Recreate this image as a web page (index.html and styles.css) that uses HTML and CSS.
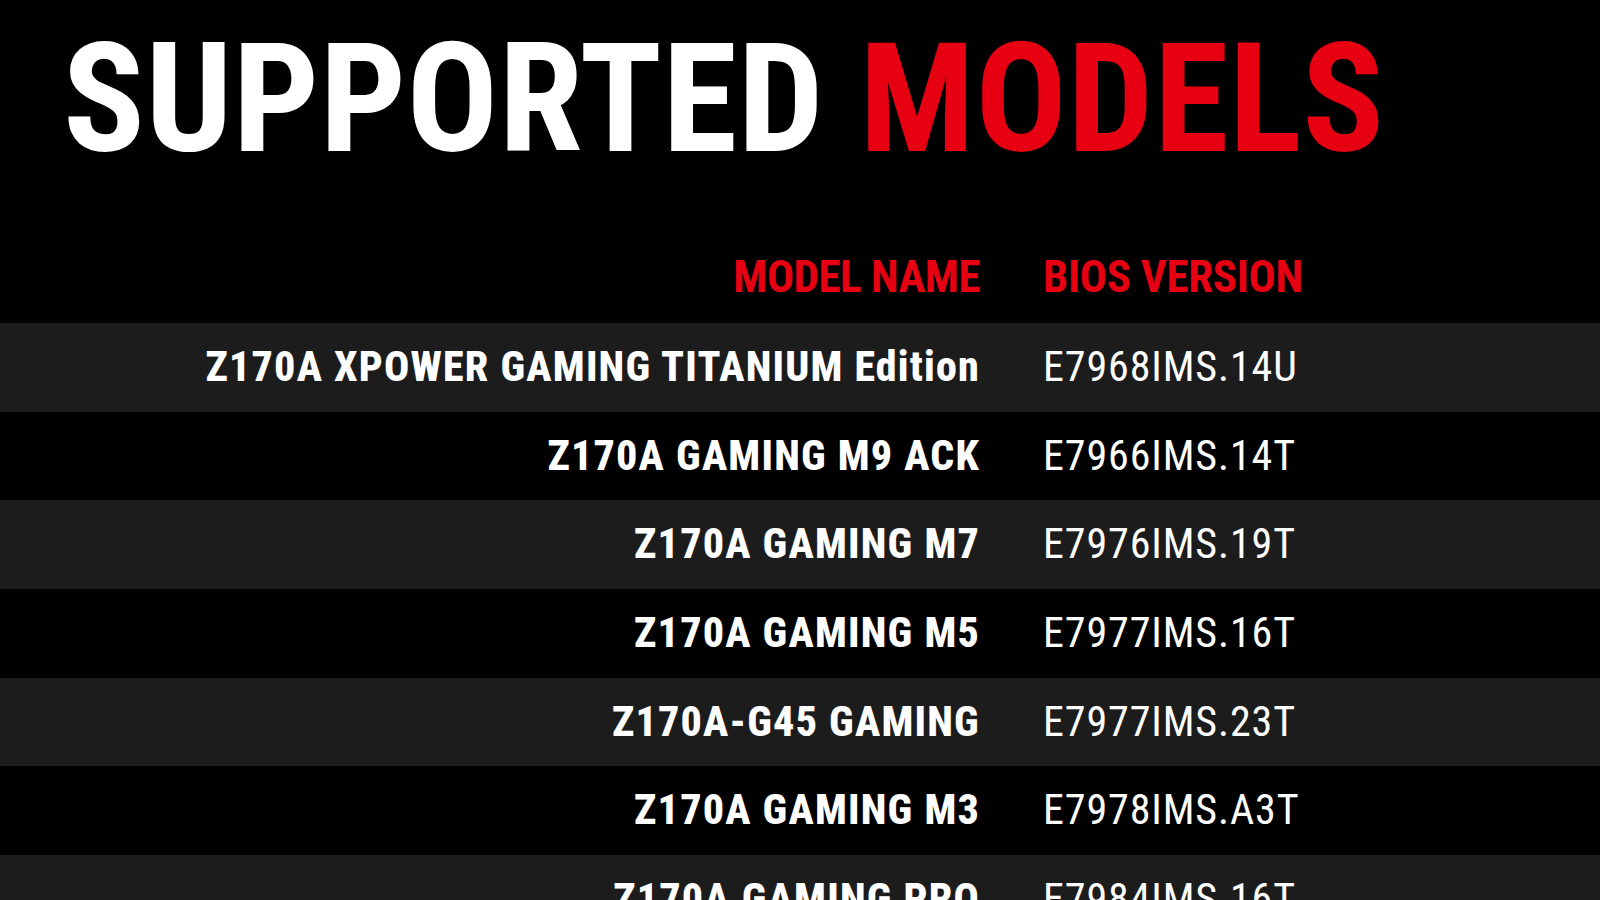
FILE: index.html
```html
<!DOCTYPE html>
<html lang="en">
<head>
<meta charset="utf-8">
<title>Supported Models</title>
<link rel="stylesheet" href="styles.css">
</head>
<body>
<main class="page">
  <h1 class="title"><span class="title-white">SUPPORTED</span> <span class="title-red">MODELS</span></h1>
  <div class="models">
    <div class="row head">
      <div class="cell model">MODEL NAME</div>
      <div class="cell bios">BIOS VERSION</div>
    </div>
    <div class="row alt">
      <div class="cell model">Z170A XPOWER GAMING TITANIUM Edition</div>
      <div class="cell bios">E7968IMS.14U</div>
    </div>
    <div class="row">
      <div class="cell model">Z170A GAMING M9 ACK</div>
      <div class="cell bios">E7966IMS.14T</div>
    </div>
    <div class="row alt">
      <div class="cell model">Z170A GAMING M7</div>
      <div class="cell bios">E7976IMS.19T</div>
    </div>
    <div class="row">
      <div class="cell model">Z170A GAMING M5</div>
      <div class="cell bios">E7977IMS.16T</div>
    </div>
    <div class="row alt">
      <div class="cell model">Z170A-G45 GAMING</div>
      <div class="cell bios">E7977IMS.23T</div>
    </div>
    <div class="row">
      <div class="cell model">Z170A GAMING M3</div>
      <div class="cell bios">E7978IMS.A3T</div>
    </div>
    <div class="row alt">
      <div class="cell model">Z170A GAMING PRO</div>
      <div class="cell bios">E7984IMS.16T</div>
    </div>
  </div>
</main>
</body>
</html>
```
FILE: styles.css
```css
html, body {
  margin: 0;
  padding: 0;
  background: #000;
  height: 100%;
  overflow: hidden;
}
.page {
  font-family: "Roboto", "Liberation Sans", sans-serif;
  font-stretch: 75%;
  color: #fff;
}
.title {
  margin: 0;
  padding: 23px 0 0 63px;
  font-size: 152px;
  line-height: 152px;
  font-weight: 700;
  letter-spacing: 0.5px;
}
.title-red { color: #e60012; }
.models {
  margin-top: 74px;
}
.row {
  display: grid;
  grid-template-columns: 980px 1fr;
  column-gap: 63px;
  height: 88.67px;
  line-height: 88.67px;
  font-size: 42px;
}
.row.alt { background: #1c1c1c; }
.cell { white-space: nowrap; }
.model {
  text-align: right;
  font-weight: 800;
  letter-spacing: 1.2px;
}
.bios {
  font-weight: 400;
  letter-spacing: 0.9px;
}
.row.head {
  height: 56px;
  line-height: 56px;
  font-size: 45px;
  margin-bottom: 18px;
  color: #e60012;
  font-weight: 700;
}
.row.head .model {
  font-weight: 700;
  letter-spacing: -0.5px;
}
.row.head .bios {
  font-weight: 700;
  letter-spacing: -0.3px;
}
```
